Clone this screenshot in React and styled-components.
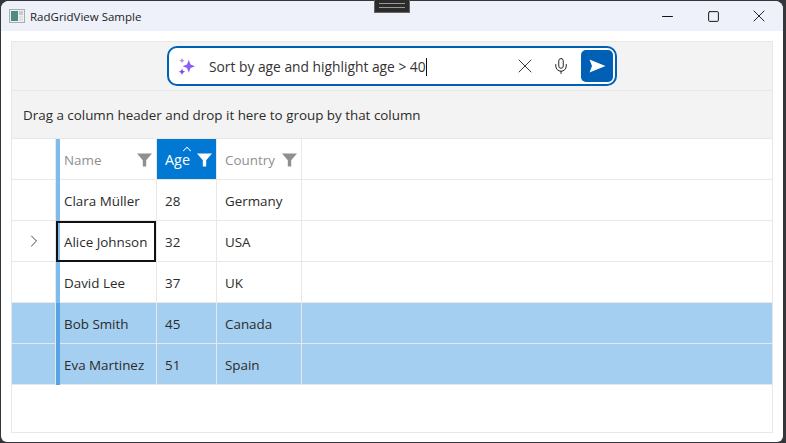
import React from "react";
import styled, { createGlobalStyle } from "styled-components";
import { Minus, Square, X, Mic, ChevronRight, ChevronUp } from "lucide-react";

const people = [
  { name: "Clara Müller", age: 28, country: "Germany" },
  { name: "Alice Johnson", age: 32, country: "USA", current: true },
  { name: "David Lee", age: 37, country: "UK" },
  { name: "Bob Smith", age: 45, country: "Canada", marked: true },
  { name: "Eva Martinez", age: 51, country: "Spain", marked: true },
];

const FilterIcon = ({ color }) => (
  <svg viewBox="0 0 15 14" width="15" height="14">
    <path d="M0 0.5h15L9.2 7.2V13.5H5.8V7.2z" fill={color} />
  </svg>
);

const Sparkle = () => (
  <svg width="18" height="18" viewBox="0 0 18 18">
    <path d="M10.8 3l1.8 4.4 4.4 1.8-4.4 1.8-1.8 4.4-1.8-4.4-4.4-1.8 4.4-1.8z" fill="#8b5cf6" />
    <path d="M4 1l.8 1.8L6.6 3.6l-1.8.8L4 6.2l-.8-1.8L1.4 3.6l1.8-.8z" fill="#b58cf0" />
    <path d="M4 11.5l1 2.2 2.2 1-2.2 1L4 18l-1-2.3-2.2-1 2.2-1z" fill="#7c4fe0" />
  </svg>
);

const AppIcon = () => (
  <svg width="16" height="14" viewBox="0 0 16 14">
    <rect x="0.5" y="0.5" width="15" height="13" fill="#eef0f0" stroke="#a8adb0" />
    <rect x="2" y="2" width="7" height="10" fill="#4f8a85" />
    <rect x="10" y="2" width="4" height="4" fill="#c3ccd0" />
    <rect x="10" y="7" width="4" height="5" fill="#dfe3e5" />
  </svg>
);

const App = () => {
  return (
    <>
      <GlobalStyle />
      <Desktop>
        <DragHandle />
        <Win>
          <TitleBar>
            <AppIcon />
            <Title>RadGridView Sample</Title>
            <Controls>
              <ControlButton><Minus size={17} strokeWidth={1.4} /></ControlButton>
              <ControlButton><Square size={13} strokeWidth={1.8} /></ControlButton>
              <ControlButton><X size={20} strokeWidth={1.1} /></ControlButton>
            </Controls>
          </TitleBar>
          <Body>
            <Grid>
              <SearchBand>
                <SearchBox>
                  <Sparkle />
                  <SearchText>Sort by age and highlight age &gt; 40<Caret /></SearchText>
                  <SearchIcon><X size={24} strokeWidth={0.9} /></SearchIcon>
                  <SearchIcon><Mic size={18} strokeWidth={1.3} /></SearchIcon>
                  <SendButton>
                    <svg width="17" height="14" viewBox="0 0 17 14">
                      <path d="M0.5 0.5L16.5 7 0.5 13.5 3 7z" fill="#fff" />
                    </svg>
                  </SendButton>
                </SearchBox>
              </SearchBand>
              <GroupPanel>Drag a column header and drop it here to group by that column</GroupPanel>
              <HeaderRow>
                <Indent />
                <Bar />
                <HeadCell $w={96} $first>
                  Name
                  <FilterIcon color="#8f8f8f" />
                </HeadCell>
                <HeadCell $w={59} $sorted>
                  <SortArrow><ChevronUp size={14} strokeWidth={1.8} /></SortArrow>
                  Age
                  <FilterIcon color="#fff" />
                </HeadCell>
                <HeadCell $w={84}>
                  Country
                  <FilterIcon color="#8f8f8f" />
                </HeadCell>
              </HeaderRow>
              {people.map((p) => (
                <Row key={p.name} $marked={p.marked}>
                  <Indent>{p.current && <ChevronRight size={20} strokeWidth={1.1} />}</Indent>
                  <Bar $marked={p.marked} />
                  <Cell $w={96} $first $current={p.current}>{p.name}</Cell>
                  <Cell $w={59}>{p.age}</Cell>
                  <Cell $w={84}>{p.country}</Cell>
                </Row>
              ))}
            </Grid>
          </Body>
        </Win>
      </Desktop>
    </>
  );
};

export default App;

const GlobalStyle = createGlobalStyle`
  html, body {
    margin: 0;
    padding: 0;
    overflow: hidden;
  }
  * {
    box-sizing: border-box;
  }
`;

const Desktop = styled.div`
  position: relative;
  width: 786px;
  height: 443px;
  padding: 1px 3px 1px 1px;
  background: #34363a;
  font-family: "Open Sans", "Noto Sans", sans-serif;
  font-size: 13.4px;
  color: #2b2b2b;
`;

const DragHandle = styled.div`
  position: absolute;
  top: 0;
  left: 374px;
  z-index: 2;
  width: 36px;
  height: 13px;
  background: #2b2b2b;
  border: 1px solid #666;
  border-top: 0;
  &::after {
    content: "";
    display: block;
    margin: 3px 4px 0;
    height: 3px;
    border-top: 1px solid #999;
    border-bottom: 1px solid #999;
  }
`;

const Win = styled.div`
  display: flex;
  flex-direction: column;
  height: 100%;
  background: #fff;
  border-radius: 8px 8px 6px 6px;
  overflow: hidden;
`;

const TitleBar = styled.div`
  display: flex;
  align-items: center;
  flex: none;
  height: 30px;
  padding-left: 8px;
  background: #eef1fa;
`;

const Title = styled.span`
  margin-left: 5px;
  font-size: 11.5px;
  color: #1c1c1c;
`;

const Controls = styled.div`
  display: flex;
  margin-left: auto;
  padding-right: 1px;
`;

const ControlButton = styled.div`
  display: flex;
  align-items: center;
  justify-content: center;
  width: 46px;
  height: 30px;
  color: #111;
`;

const Body = styled.div`
  flex: 1;
  padding: 10px 10px 9px 10px;
`;

const Grid = styled.div`
  height: 100%;
  border: 1px solid #e8e8e8;
`;

const SearchBand = styled.div`
  display: flex;
  justify-content: center;
  height: 49px;
  padding: 4px 0 0 0;
  background: #f3f3f3;
  border-bottom: 1px solid #e8e8e8;
`;

const SearchBox = styled.div`
  display: flex;
  align-items: center;
  width: 450px;
  height: 40px;
  padding: 0 2px 0 9px;
  background: #fff;
  border: 2px solid #0060b5;
  border-radius: 10px;
`;

const SearchText = styled.div`
  flex: 1;
  margin-left: 13px;
  font-size: 13.8px;
  color: #333;
`;

const Caret = styled.span`
  display: inline-block;
  width: 1px;
  height: 18px;
  margin-bottom: -4px;
  background: #111;
`;

const SearchIcon = styled.div`
  display: flex;
  align-items: center;
  justify-content: center;
  width: 36px;
  color: #222;
`;

const SendButton = styled.div`
  display: flex;
  align-items: center;
  justify-content: center;
  width: 32px;
  height: 32px;
  margin-left: 2px;
  background: #0060b5;
  border-radius: 5px;
`;

const GroupPanel = styled.div`
  display: flex;
  align-items: center;
  height: 48px;
  padding-left: 11px;
  background: #f3f3f3;
  border-bottom: 1px solid #e8e8e8;
`;

const HeaderRow = styled.div`
  display: flex;
  height: 41px;
  border-bottom: 1px solid #e8e8e8;
`;

const Row = styled.div`
  display: flex;
  height: 41px;
  border-bottom: 1px solid #e8e8e8;
  background: ${(p) => (p.$marked ? "#a5cff0" : "transparent")};
`;

const Indent = styled.div`
  display: flex;
  align-items: center;
  justify-content: center;
  flex: none;
  width: 44px;
  color: #333;
  border-right: 1px solid #e8e8e8;
`;

const Bar = styled.div`
  flex: none;
  width: 4px;
  margin-bottom: -1px;
  background: ${(p) => (p.$marked ? "#56a4e6" : "#7fbcee")};
`;

const HeadCell = styled.div`
  position: relative;
  display: flex;
  align-items: center;
  justify-content: space-between;
  flex: none;
  width: ${(p) => p.$w + 1}px;
  padding: 1px 4px 0 ${(p) => (p.$first ? "4px" : "8px")};
  border-right: 1px solid #e8e8e8;
  background: ${(p) => (p.$sorted ? "#0078d4" : "transparent")};
  color: ${(p) => (p.$sorted ? "#fff" : "#8f8f8f")};
  font-size: ${(p) => (p.$sorted ? "14.4px" : "13.4px")};
`;

const SortArrow = styled.div`
  position: absolute;
  top: 3px;
  left: 23px;
  line-height: 0;
`;

const Cell = styled.div`
  position: relative;
  display: flex;
  align-items: center;
  flex: none;
  width: ${(p) => p.$w + 1}px;
  padding: 2px 0 0 ${(p) => (p.$first ? "4px" : "8px")};
  border-right: 1px solid #e8e8e8;
  white-space: nowrap;
  ${(p) =>
    p.$current &&
    `
    &::after {
      content: "";
      position: absolute;
      top: 0;
      bottom: -1px;
      left: -4px;
      right: 0;
      border: 2px solid #111;
    }
  `}
`;
